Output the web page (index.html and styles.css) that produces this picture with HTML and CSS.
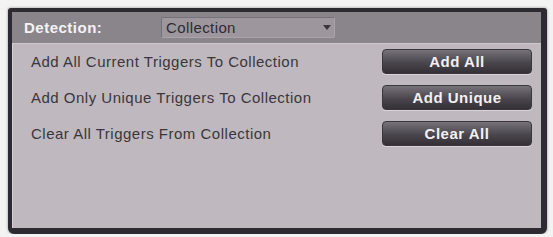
FILE: index.html
```html
<!DOCTYPE html>
<html lang="en">

<head>
    <meta charset="UTF-8">
    <title>Detection - Collection</title>
    <link rel="stylesheet" href="styles.css">
</head>

<body>
    <div class="frame">
        <div class="header">
            <span class="label">Detection:</span>
            <div class="select">
                <span>Collection</span>
                <span class="arrow"></span>
            </div>
        </div>
        <div class="panel">
            <div class="row">
                <span class="desc">Add All Current Triggers To Collection</span>
                <button class="btn">Add All</button>
            </div>
            <div class="row">
                <span class="desc">Add Only Unique Triggers To Collection</span>
                <button class="btn">Add Unique</button>
            </div>
            <div class="row">
                <span class="desc">Clear All Triggers From Collection</span>
                <button class="btn">Clear All</button>
            </div>
        </div>
    </div>
</body>

</html>
```

FILE: styles.css
```css
body {
    margin: 0;
    background: #f3f3f3;
    font-family: "Liberation Sans", Arial, sans-serif;
}

.frame {
    margin: 8px 6px 0 8px;
    height: 216px;
    border-style: solid;
    border-color: #2e2a31;
    border-width: 4px 6px 6px 4px;
    border-radius: 3px 3px 6px 6px;
    background: #bfb9bf;
    display: flex;
    flex-direction: column;
    box-shadow: 0 0 3px rgba(0, 0, 0, 0.4);
}

.header {
    height: 31px;
    background: #8a858b;
    border-bottom: 1px solid #cfc9cf;
    display: flex;
    align-items: center;
    padding-left: 12px;
}

.label {
    width: 137px;
    color: #f4f2f4;
    font-weight: bold;
    font-size: 15px;
    letter-spacing: 0.5px;
}

.select {
    box-sizing: border-box;
    width: 174px;
    height: 21px;
    background: #9d979d;
    border: 1px solid #77727a;
    border-right-color: #aaa4aa;
    border-bottom-color: #aaa4aa;
    border-radius: 2px;
    display: flex;
    align-items: center;
    justify-content: space-between;
    padding: 0 3px 0 4px;
    font-size: 15px;
    letter-spacing: 0.4px;
    color: #2f2b31;
}

.arrow {
    width: 0;
    height: 0;
    border-left: 4px solid transparent;
    border-right: 4px solid transparent;
    border-top: 5px solid #3a363c;
}

.panel {
    flex: 1;
    padding: 5px 9px 0 18px;
    display: flex;
    flex-direction: column;
    gap: 11px;
    border-left: 1px solid #d4ced4;
}

.row {
    display: flex;
    align-items: center;
    justify-content: space-between;
    height: 25px;
}

.desc {
    font-size: 15px;
    letter-spacing: 0.5px;
    color: #3a363b;
}

.btn {
    width: 150px;
    height: 25px;
    border: 1px solid #3a363c;
    border-radius: 4px;
    background: linear-gradient(#77727a, #4a464d 55%, #343036);
    color: #f2f0f2;
    font-family: "Liberation Sans", Arial, sans-serif;
    font-weight: bold;
    font-size: 15px;
    letter-spacing: 0.5px;
    box-shadow: 0 1px 0 #d8d2d8;
}
```
